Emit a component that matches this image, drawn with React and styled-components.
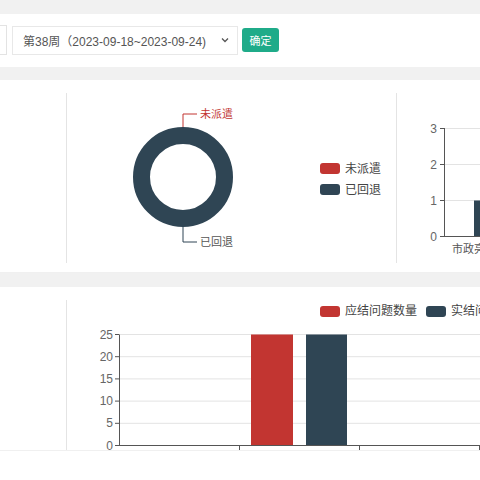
import React from "react";
import styled, { createGlobalStyle } from "styled-components";

const GlobalStyle = createGlobalStyle`
  html, body {
    margin: 0;
    padding: 0;
    background: #fff;
    font-family: "Liberation Sans", "Noto Sans CJK SC", sans-serif;
    overflow: hidden;
  }
`;

const RED = "#c23531";
const DARK = "#2f4554";

const Page = styled.div`
  width: 480px;
  height: 480px;
  overflow: hidden;
  display: flex;
  flex-direction: column;
  background: #f1f1f1;
  padding-top: 14px;
  box-sizing: border-box;
`;

const Toolbar = styled.div`
  height: 53px;
  background: #fff;
  display: flex;
  align-items: center;
  gap: 5px;
  flex-shrink: 0;
`;

const CutInput = styled.div`
  width: 6px;
  height: 28px;
  border: 1px solid #e3e3e3;
  border-left: none;
  margin-top: -1px;
`;

const WeekSelect = styled.div`
  width: 226px;
  height: 29px;
  box-sizing: border-box;
  border: 1px solid #e8e8e8;
  display: flex;
  align-items: center;
  justify-content: space-between;
  padding: 0 7px 0 10px;
  font-size: 12px;
  color: #555;
  white-space: nowrap;
  margin-top: -1px;
`;

const Button = styled.button`
  width: 37px;
  height: 24px;
  border: none;
  border-radius: 3px;
  background: #1fab89;
  color: #fff;
  font-family: inherit;
  font-size: 11px;
  padding: 0;
  margin-left: -1px;
  margin-top: -1px;
`;

const Panel = styled.div`
  background: #fff;
  margin-top: ${(p) => p.$gap}px;
  height: ${(p) => p.$h}px;
  display: flex;
  padding-top: 13px;
  box-sizing: border-box;
  flex-shrink: 0;
  border-bottom: 1px solid #f0f0f0;
`;

const Blank = styled.div`
  width: 66px;
  flex-shrink: 0;
`;

const Column = styled.div`
  border-left: 1px solid #e4e4e4;
  height: ${(p) => p.$h}px;
  width: ${(p) => p.$w}px;
  flex-shrink: 0;
  display: flex;
  flex-direction: ${(p) => (p.$col ? "column" : "row")};
  align-items: ${(p) => (p.$col ? "flex-start" : "center")};
`;

const Legend = styled.div`
  display: flex;
  flex-direction: ${(p) => (p.$row ? "row" : "column")};
  gap: 9px;
  margin-left: ${(p) => p.$left}px;
  margin-top: ${(p) => p.$top || 0}px;
  margin-bottom: ${(p) => p.$bottom || 0}px;
  white-space: nowrap;
`;

const LegendItem = styled.div`
  display: flex;
  align-items: center;
  gap: 5px;
  height: 12px;
  font-size: 12px;
  line-height: 12px;
  color: #444;
`;

const Swatch = styled.span`
  width: 20px;
  height: 11px;
  border-radius: 3px;
  background: ${(p) => p.$color};
`;

const Footer = styled.div`
  flex: 1;
  background: #fff;
`;

const Chevron = () => (
  <svg width="10" height="10" viewBox="0 0 10 10">
    <path d="M2 3.5 L5 6.5 L8 3.5" fill="none" stroke="#555" strokeWidth="1.3" />
  </svg>
);

const Donut = () => (
  <svg width="240" height="170" style={{ flexShrink: 0 }}>
    <circle cx="116" cy="84" r="41.5" fill="none" stroke={DARK} strokeWidth="17" />
    <path d="M116 34 L116 21 L130 21" fill="none" stroke={RED} strokeWidth="1" />
    <text x="133" y="25" fontSize="11" fill={RED}>未派遣</text>
    <path d="M116 134 L116 149 L130 149" fill="none" stroke={DARK} strokeWidth="1" />
    <text x="133" y="153" fontSize="11" fill="#555">已回退</text>
  </svg>
);

const SmallBar = () => {
  const ys = [143.5, 107.5, 71.5, 35.5];
  return (
    <svg width="83" height="170" style={{ flexShrink: 0 }}>
      {ys.slice(1).map((y) => (
        <line key={y} x1="47" x2="83" y1={y} y2={y} stroke="#e3e3e3" />
      ))}
      <rect x="77" y="107.5" width="20" height="36" fill={DARK} />
      <line x1="47.5" x2="47.5" y1="35" y2="144" stroke="#555" />
      <line x1="47" x2="83" y1="143.5" y2="143.5" stroke="#555" />
      {ys.map((y, i) => (
        <g key={i}>
          <line x1="43" x2="47" y1={y} y2={y} stroke="#555" />
          <text x="40" y={y + 4} fontSize="12" fill="#666" textAnchor="end">{i}</text>
        </g>
      ))}
      <text x="55" y="160" fontSize="11" fill="#555">市政亮化</text>
    </svg>
  );
};

const BigBar = () => {
  const vals = [0, 5, 10, 15, 20, 25];
  const y = (v) => 125.5 - v * 4.44;
  return (
    <svg width="413" height="134" style={{ flexShrink: 0 }}>
      {vals.slice(1).map((v) => (
        <line key={v} x1="52" x2="413" y1={y(v)} y2={y(v)} stroke="#e3e3e3" />
      ))}
      <rect x="184" y={y(25)} width="42" height={125.5 - y(25)} fill={RED} />
      <rect x="239" y={y(25)} width="41" height={125.5 - y(25)} fill={DARK} />
      <line x1="52.5" x2="52.5" y1={y(25)} y2="126" stroke="#555" />
      <line x1="52" x2="413" y1="125.5" y2="125.5" stroke="#555" />
      {[172.5, 292.5, 412.5].map((x) => (
        <line key={x} x1={x} x2={x} y1="125" y2="130" stroke="#555" />
      ))}
      {vals.map((v) => (
        <g key={v}>
          <line x1="48" x2="52" y1={y(v)} y2={y(v)} stroke="#555" />
          <text x="46" y={y(v) + 4} fontSize="12" fill="#666" textAnchor="end">{v}</text>
        </g>
      ))}
    </svg>
  );
};

export default function App() {
  return (
    <>
      <GlobalStyle />
      <Page>
        <Toolbar>
          <CutInput />
          <WeekSelect>
            <span>第38周（2023-09-18~2023-09-24)</span>
            <Chevron />
          </WeekSelect>
          <Button>确定</Button>
        </Toolbar>

        <Panel $gap={13} $h={193}>
          <Blank />
          <Column $h={170} $w={329}>
            <Donut />
            <Legend $left={13} $top={2}>
              <LegendItem><Swatch $color={RED} />未派遣</LegendItem>
              <LegendItem><Swatch $color={DARK} />已回退</LegendItem>
            </Legend>
          </Column>
          <Column $h={170} $w={83}>
            <SmallBar />
          </Column>
        </Panel>

        <Panel $gap={14} $h={164}>
          <Blank />
          <Column $h={150} $w={413} $col>
            <Legend $row $left={253} $top={5} $bottom={3}>
              <LegendItem><Swatch $color={RED} />应结问题数量</LegendItem>
              <LegendItem><Swatch $color={DARK} />实结问题数量</LegendItem>
            </Legend>
            <BigBar />
          </Column>
        </Panel>
        <Footer />
      </Page>
    </>
  );
}
